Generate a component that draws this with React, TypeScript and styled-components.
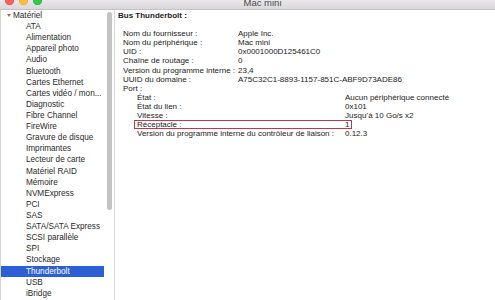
import React from "react";
import styled, { createGlobalStyle } from "styled-components";

const GlobalStyle = createGlobalStyle`
  html, body { margin: 0; padding: 0; background: #ffffff; }
  body { font-family: "Liberation Sans", Arial, sans-serif; -webkit-font-smoothing: antialiased; }
`;

const Window = styled.div`
  width: 495px;
  height: 300px;
  display: flex;
  flex-direction: column;
  overflow: hidden;
  background: #ffffff;
`;

const TitleBar = styled.div`
  height: 9px;
  flex: none;
  overflow: hidden;
  background: linear-gradient(#e9e7e9, #d9d7d9);
  border-bottom: 1px solid #c4c2c4;
`;

const TitleInner = styled.div`
  width: 525px;
  height: 13px;
  margin-top: -4px;
  display: grid;
  grid-template-columns: 1fr auto 1fr;
  align-items: center;
`;

const Lights = styled.div`
  display: flex;
  gap: 5px;
  padding-left: 5px;
  align-self: start;
`;

const Light = styled.span<{ $c: string; $b: string }>`
  width: 9px;
  height: 9px;
  border-radius: 50%;
  background: ${(p) => p.$c};
  box-shadow: inset 0 0 0 0.5px ${(p) => p.$b};
`;

const Title = styled.div`
  font-size: 9.5px;
  color: #4c4c4c;
  line-height: 13px;
`;

const Body = styled.div`
  flex: 1;
  display: flex;
  min-height: 0;
`;

const Sidebar = styled.div`
  width: 114px;
  flex: none;
  display: flex;
  border-left: 1px solid #d4d4d4;
  box-sizing: border-box;
`;

const List = styled.div`
  width: 103px;
  flex: none;
  font-size: 8.2px;
  color: #2a2a2a;
`;

const GroupRow = styled.div`
  height: 11.12px;
  display: flex;
  align-items: center;
  padding-left: 6px;
  gap: 2px;
`;

const Disclosure = styled.span`
  width: 0;
  height: 0;
  border-left: 2px solid transparent;
  border-right: 2px solid transparent;
  border-top: 3.5px solid #7b7b7b;
`;

const Item = styled.div<{ $selected?: boolean }>`
  height: 11.12px;
  line-height: 11.12px;
  padding-left: 25px;
  white-space: nowrap;
  background: ${(p) => (p.$selected ? "#2c5fd6" : "transparent")};
  color: ${(p) => (p.$selected ? "#ffffff" : "#2a2a2a")};
`;

const ScrollTrack = styled.div`
  flex: 1;
  display: flex;
  justify-content: center;
  padding: 2px 0 0 1px;
  box-sizing: border-box;
`;

const Thumb = styled.div`
  width: 5px;
  height: 198px;
  border-radius: 3px;
  background: #c3c3c3;
`;

const Divider = styled.div`
  width: 1px;
  flex: none;
  background: #d9d9d9;
`;

const Content = styled.div`
  flex: 1;
  padding: 1px 0 0 3px;
  font-size: 8px;
  line-height: 9.1px;
  color: #222222;
`;

const Heading = styled.div`
  font-weight: bold;
  margin-bottom: 9.1px;
`;

const Props = styled.div`
  display: grid;
  grid-template-columns: 115px auto;
  padding-left: 5px;
  white-space: nowrap;
`;

const SubProps = styled.div`
  display: grid;
  grid-template-columns: 208px auto;
  padding-left: 19px;
  white-space: nowrap;
`;

const HighlightRow = styled.div`
  grid-column: 1 / -1;
  display: grid;
  grid-template-columns: 208px auto;
  width: max-content;
  margin-left: -3px;
  padding: 0 3px;
  outline: 1px solid #c23848;
  outline-offset: -1px;
`;

const items = [
  "ATA",
  "Alimentation",
  "Appareil photo",
  "Audio",
  "Bluetooth",
  "Cartes Ethernet",
  "Cartes vidéo / mon...",
  "Diagnostic",
  "Fibre Channel",
  "FireWire",
  "Gravure de disque",
  "Imprimantes",
  "Lecteur de carte",
  "Matériel RAID",
  "Mémoire",
  "NVMExpress",
  "PCI",
  "SAS",
  "SATA/SATA Express",
  "SCSI parallèle",
  "SPI",
  "Stockage",
  "Thunderbolt",
  "USB",
  "iBridge",
];

const props: [string, string][] = [
  ["Nom du fournisseur :", "Apple Inc."],
  ["Nom du périphérique :", "Mac mini"],
  ["UID :", "0x0001000D125461C0"],
  ["Chaîne de routage :", "0"],
  ["Version du programme interne :", "23,4"],
  ["UUID du domaine :", "A75C32C1-8893-1157-851C-ABF9D73ADE86"],
  ["Port :", ""],
];

export default function App() {
  return (
    <>
      <GlobalStyle />
      <Window>
        <TitleBar>
          <TitleInner>
            <Lights>
              <Light $c="#fc605b" $b="#de4a45" />
              <Light $c="#fdbc40" $b="#dea236" />
              <Light $c="#34c84a" $b="#27aa35" />
            </Lights>
            <Title>Mac mini</Title>
            <div />
          </TitleInner>
        </TitleBar>
        <Body>
          <Sidebar>
            <List>
              <GroupRow>
                <Disclosure />
                <span>Matériel</span>
              </GroupRow>
              {items.map((it) => (
                <Item key={it} $selected={it === "Thunderbolt"}>
                  {it}
                </Item>
              ))}
            </List>
            <ScrollTrack>
              <Thumb />
            </ScrollTrack>
          </Sidebar>
          <Divider />
          <Content>
            <Heading>Bus Thunderbolt :</Heading>
            <Props>
              {props.map(([k, v]) => (
                <React.Fragment key={k}>
                  <span>{k}</span>
                  <span>{v}</span>
                </React.Fragment>
              ))}
            </Props>
            <SubProps>
              <span>État :</span>
              <span>Aucun périphérique connecté</span>
              <span>État du lien :</span>
              <span>0x101</span>
              <span>Vitesse :</span>
              <span>Jusqu’à 10 Go/s x2</span>
              <HighlightRow>
                <span>Réceptacle :</span>
                <span>1</span>
              </HighlightRow>
              <span>Version du programme interne du contrôleur de liaison :</span>
              <span>0.12.3</span>
            </SubProps>
          </Content>
        </Body>
      </Window>
    </>
  );
}
